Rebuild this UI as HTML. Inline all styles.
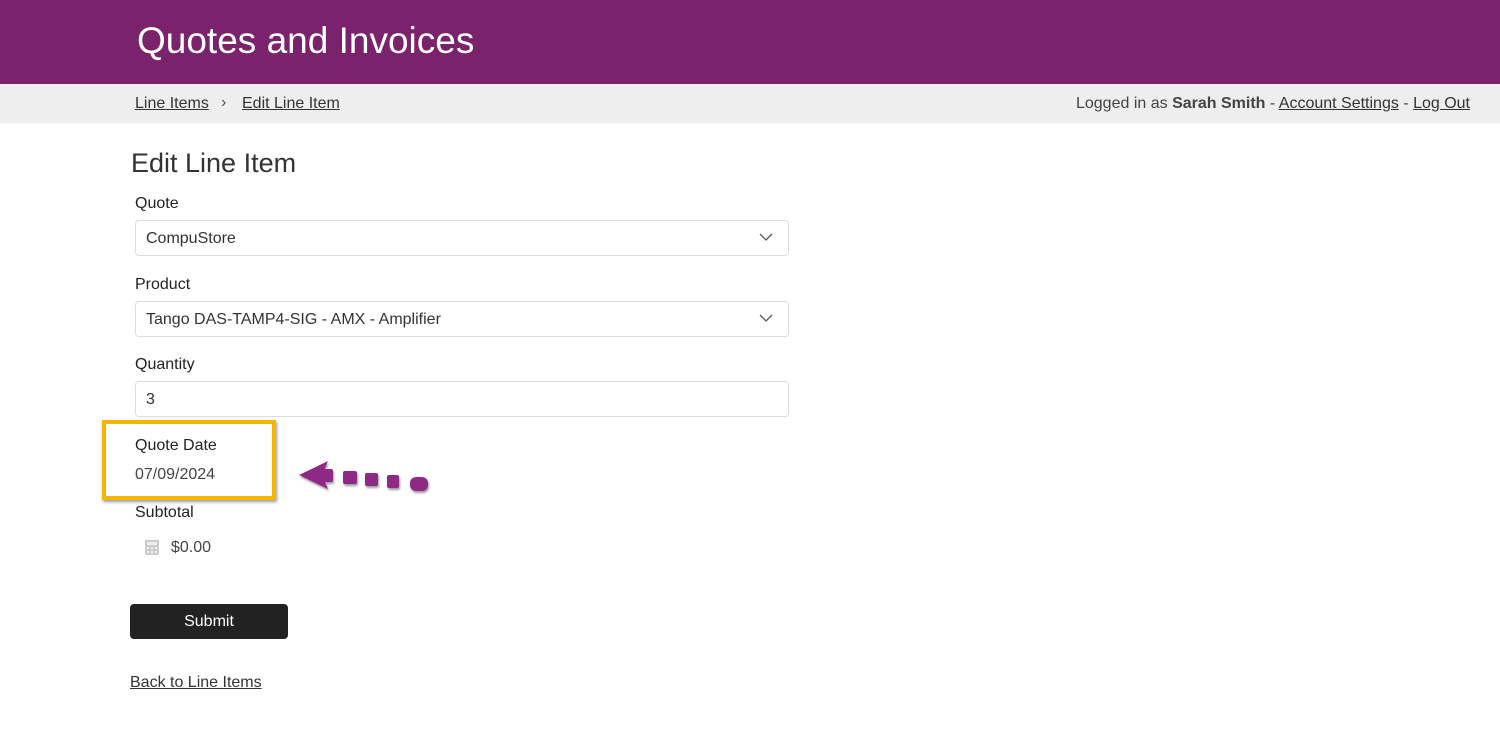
<!DOCTYPE html>
<html><head><meta charset="utf-8"><style>
*{box-sizing:border-box;margin:0;padding:0}
body{width:1500px;height:751px;background:#fff;font-family:"Liberation Sans",sans-serif;color:#333;position:relative;overflow:hidden}
.hdr{position:absolute;left:0;top:0;width:1500px;height:84px;background:#7a226c}
.hdr h1{position:absolute;left:137px;top:20px;font-weight:normal;font-size:37px;color:#fff}
.bar{position:absolute;left:0;top:84px;width:1500px;height:39px;background:#eeeeee;font-size:16px}
a{color:#333;text-decoration:underline}
.abs{position:absolute}
.lbl{position:absolute;left:135px;font-size:16px;color:#222}
.inp{position:absolute;left:135px;width:654px;height:36px;border:1px solid #ddd;border-radius:4px;font-size:16px;padding:9px 10px;color:#333}
.chev{position:absolute;right:15px;top:11px}
</style></head><body>
<div class="hdr"><h1>Quotes and Invoices</h1></div>
<div class="bar">
<a class="abs" style="left:135px;top:11px" href="#">Line Items</a>
<span class="abs" style="left:221px;top:10px;color:#555">›</span>
<a class="abs" style="left:242px;top:11px" href="#">Edit Line Item</a>
<span class="abs" style="right:30px;top:11px;color:#444">Logged in as <b>Sarah Smith</b> - <a href="#">Account Settings</a> - <a href="#">Log Out</a></span>
</div>
<div class="abs" style="left:131px;top:148px;font-size:27px;color:#333">Edit Line Item</div>
<div class="lbl" style="top:195px">Quote</div>
<div class="inp" style="top:220px">CompuStore<svg class="chev" width="14" height="10" viewBox="0 0 14 10"><path d="M1 2l6 6 6-6" fill="none" stroke="#555" stroke-width="1.3"/></svg></div>
<div class="lbl" style="top:276px">Product</div>
<div class="inp" style="top:301px">Tango DAS-TAMP4-SIG - AMX - Amplifier<svg class="chev" width="14" height="10" viewBox="0 0 14 10"><path d="M1 2l6 6 6-6" fill="none" stroke="#555" stroke-width="1.3"/></svg></div>
<div class="lbl" style="top:356px">Quantity</div>
<div class="inp" style="top:381px">3</div>
<div class="abs" style="left:102px;top:420px;width:174px;height:80px;border:4px solid #f5b600;box-shadow:1px 2px 3px rgba(0,0,0,.4)"></div>
<div class="lbl" style="top:437px">Quote Date</div>
<div class="lbl" style="top:466px;color:#444">07/09/2024</div>
<svg class="abs" style="left:295px;top:455px" width="140" height="45" viewBox="0 0 140 45">
<g fill="#8e2a86" style="filter:drop-shadow(1px 2px 1px rgba(0,0,0,.4))">
<path d="M4 20L33 6 27 20 33 34z"/>
<rect x="25" y="14" width="13" height="13" rx="2"/>
<rect x="48" y="16" width="14" height="13" rx="2"/>
<rect x="70" y="18" width="13" height="13" rx="2"/>
<rect x="92" y="20" width="12" height="13" rx="2"/>
<rect x="115" y="22" width="18" height="14" rx="6"/>
</g></svg>
<div class="lbl" style="top:504px">Subtotal</div>
<svg class="abs" style="left:145px;top:540px" width="14" height="15" viewBox="0 0 14 15"><rect width="14" height="15" fill="#ccc"/><g fill="#eee"><rect x="2" y="2" width="10" height="3"/><rect x="2" y="7" width="2" height="2"/><rect x="6" y="7" width="2" height="2"/><rect x="10" y="7" width="2" height="2"/><rect x="2" y="11" width="2" height="2"/><rect x="6" y="11" width="2" height="2"/><rect x="10" y="11" width="2" height="2"/></g></svg>
<div class="abs" style="left:171px;top:539px;font-size:16px;color:#444">$0.00</div>
<div class="abs" style="left:130px;top:604px;width:158px;height:35px;background:#222;border-radius:4px;color:#fff;font-size:16px;text-align:center;line-height:35px">Submit</div>
<a class="abs" style="left:130px;top:674px;font-size:16px" href="#">Back to Line Items</a>
</body></html>
